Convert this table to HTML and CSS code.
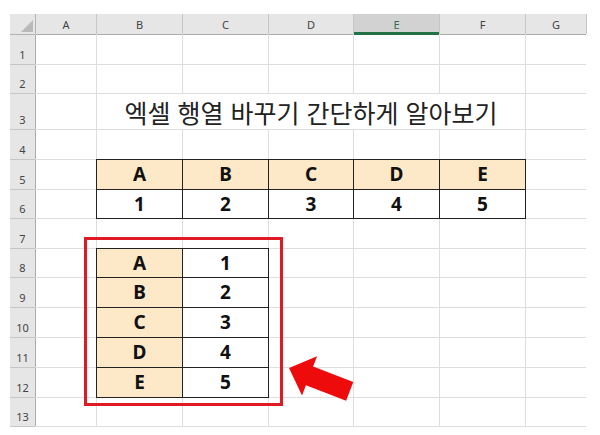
FILE: index.html
```html
<!DOCTYPE html>
<html lang="ko">
<head>
<meta charset="utf-8">
<link rel="stylesheet" href="styles.css">
</head>
<body>
<div class="sheet">
  <div class="corner"><span class="tri"></span></div>
  <div class="ch">A</div><div class="ch">B</div><div class="ch">C</div><div class="ch">D</div><div class="ch sel">E</div><div class="ch">F</div><div class="ch">G</div>

  <div class="rh">1</div><div class="c"></div><div class="c"></div><div class="c"></div><div class="c"></div><div class="c"></div><div class="c"></div><div class="c"></div>
  <div class="rh">2</div><div class="c"></div><div class="c"></div><div class="c"></div><div class="c"></div><div class="c"></div><div class="c"></div><div class="c"></div>
  <div class="rh">3</div><div class="c"></div><div class="c title">엑셀 행열 바꾸기 간단하게 알아보기</div><div class="c"></div>
  <div class="rh">4</div><div class="c"></div><div class="c"></div><div class="c"></div><div class="c"></div><div class="c"></div><div class="c"></div><div class="c"></div>

  <div class="tbl tbl-h">
    <div class="d hd">A</div><div class="d hd">B</div><div class="d hd">C</div><div class="d hd">D</div><div class="d hd">E</div>
    <div class="d">1</div><div class="d">2</div><div class="d">3</div><div class="d">4</div><div class="d">5</div>
  </div>
  <div class="tbl tbl-v">
    <div class="d hd">A</div><div class="d">1</div>
    <div class="d hd">B</div><div class="d">2</div>
    <div class="d hd">C</div><div class="d">3</div>
    <div class="d hd">D</div><div class="d">4</div>
    <div class="d hd">E</div><div class="d">5</div>
  </div>

  <div class="rh">5</div><div class="c"></div><div class="c"></div>
  <div class="rh">6</div><div class="c"></div><div class="c"></div>
  <div class="rh">7</div><div class="c"></div><div class="c"></div><div class="c"></div><div class="c"></div><div class="c"></div><div class="c"></div><div class="c"></div>
  <div class="rh">8</div><div class="c"></div><div class="c"></div><div class="c"></div><div class="c"></div><div class="c"></div>
  <div class="rh">9</div><div class="c"></div><div class="c"></div><div class="c"></div><div class="c"></div><div class="c"></div>
  <div class="rh">10</div><div class="c"></div><div class="c"></div><div class="c"></div><div class="c"></div><div class="c"></div>
  <div class="rh">11</div><div class="c"></div><div class="c"></div><div class="c"></div><div class="c"></div><div class="c"></div>
  <div class="rh">12</div><div class="c"></div><div class="c"></div><div class="c"></div><div class="c"></div><div class="c"></div>
  <div class="rh">13</div><div class="c"></div><div class="c"></div><div class="c"></div><div class="c"></div><div class="c"></div><div class="c"></div><div class="c"></div>

  <div class="highlight"></div>
  <svg class="arrow" width="90" height="60" viewBox="0 0 90 60">
    <polygon transform="translate(13 18) rotate(21)" points="0,0 22,-21 22,-10 65,-10 65,10 22,10 22,21" fill="#ee0b0b"/>
  </svg>
</div>
</body>
</html>
```
FILE: styles.css
```css
* { box-sizing: border-box; }
html, body { margin: 0; padding: 0; background: #fff; }
body { width: 600px; height: 435px; overflow: hidden; }

.sheet {
  position: relative;
  margin: 14px 0 0 10px;
  width: 576px;
  display: grid;
  grid-template-columns: 25px 60px 85px 85px 84px 85px 85px 60px;
  grid-template-rows: 20px 29px 28px 35px 29px 29px 28px 29px 28px 29px 29px 29px 29px 28px;
  gap: 1px;
  padding-bottom: 1px;
  background: #dedede;
  font-family: "Noto Sans", "Noto Sans CJK KR", sans-serif;
}

.corner {
  background: #e6e6e6;
  position: relative;
  box-shadow: 0 1px 0 #b3b3b3, 1px 0 0 #b3b3b3;
}
.tri {
  position: absolute;
  right: 2px;
  bottom: 2px;
  width: 0;
  height: 0;
  border-left: 12px solid transparent;
  border-bottom: 12px solid #b9b9b9;
}

.ch {
  background: #e6e6e6;
  color: #444;
  font-size: 11px;
  display: flex;
  align-items: center;
  justify-content: center;
  box-shadow: 0 1px 0 #ababab, 1px 0 0 #c6c6c6;
}
.ch.sel {
  background: #d2d2d2;
  color: #2f6e4a;
  box-shadow: inset 0 -2px 0 #217346, 0 1px 0 #217346, 1px 0 0 #c6c6c6;
}

.rh {
  background: #e6e6e6;
  color: #444;
  font-size: 11px;
  line-height: 13px;
  display: flex;
  align-items: flex-end;
  justify-content: center;
  padding-bottom: 3px;
  box-shadow: 1px 0 0 #ababab, 0 1px 0 #c6c6c6;
}

.c { background: #fff; }

.title {
  grid-column: span 5;
  display: flex;
  align-items: flex-end;
  justify-content: center;
  font-family: "Noto Sans CJK KR", sans-serif;
  font-size: 25px;
  line-height: 30px;
  color: #222;
  padding-bottom: 2px;
  white-space: nowrap;
}

.tbl {
  display: grid;
  gap: 1px;
  background: #222;
  border: 1px solid #222;
  margin: -1px;
  z-index: 1;
}
.tbl-h {
  grid-column: 3 / 8;
  grid-row: 6 / 8;
  grid-template-columns: 85px 85px 84px 85px 85px;
  grid-template-rows: 29px 28px;
}
.tbl-v {
  grid-column: 3 / 5;
  grid-row: 9 / 14;
  grid-template-columns: 85px 85px;
  grid-template-rows: 28px 29px 29px 29px 29px;
}
.d {
  background: #fff;
  display: flex;
  align-items: center;
  justify-content: center;
  font-family: "Noto Sans", "Noto Sans CJK KR", sans-serif;
  font-weight: 700;
  font-size: 19px;
  line-height: 1;
  color: #111;
}
.d.hd { background: #fde9c8; }

.highlight {
  position: absolute;
  left: 74px;
  top: 223px;
  width: 199px;
  height: 169px;
  border: 3px solid #de1a22;
  z-index: 2;
}
.arrow {
  position: absolute;
  left: 266px;
  top: 336px;
  z-index: 3;
}
```
